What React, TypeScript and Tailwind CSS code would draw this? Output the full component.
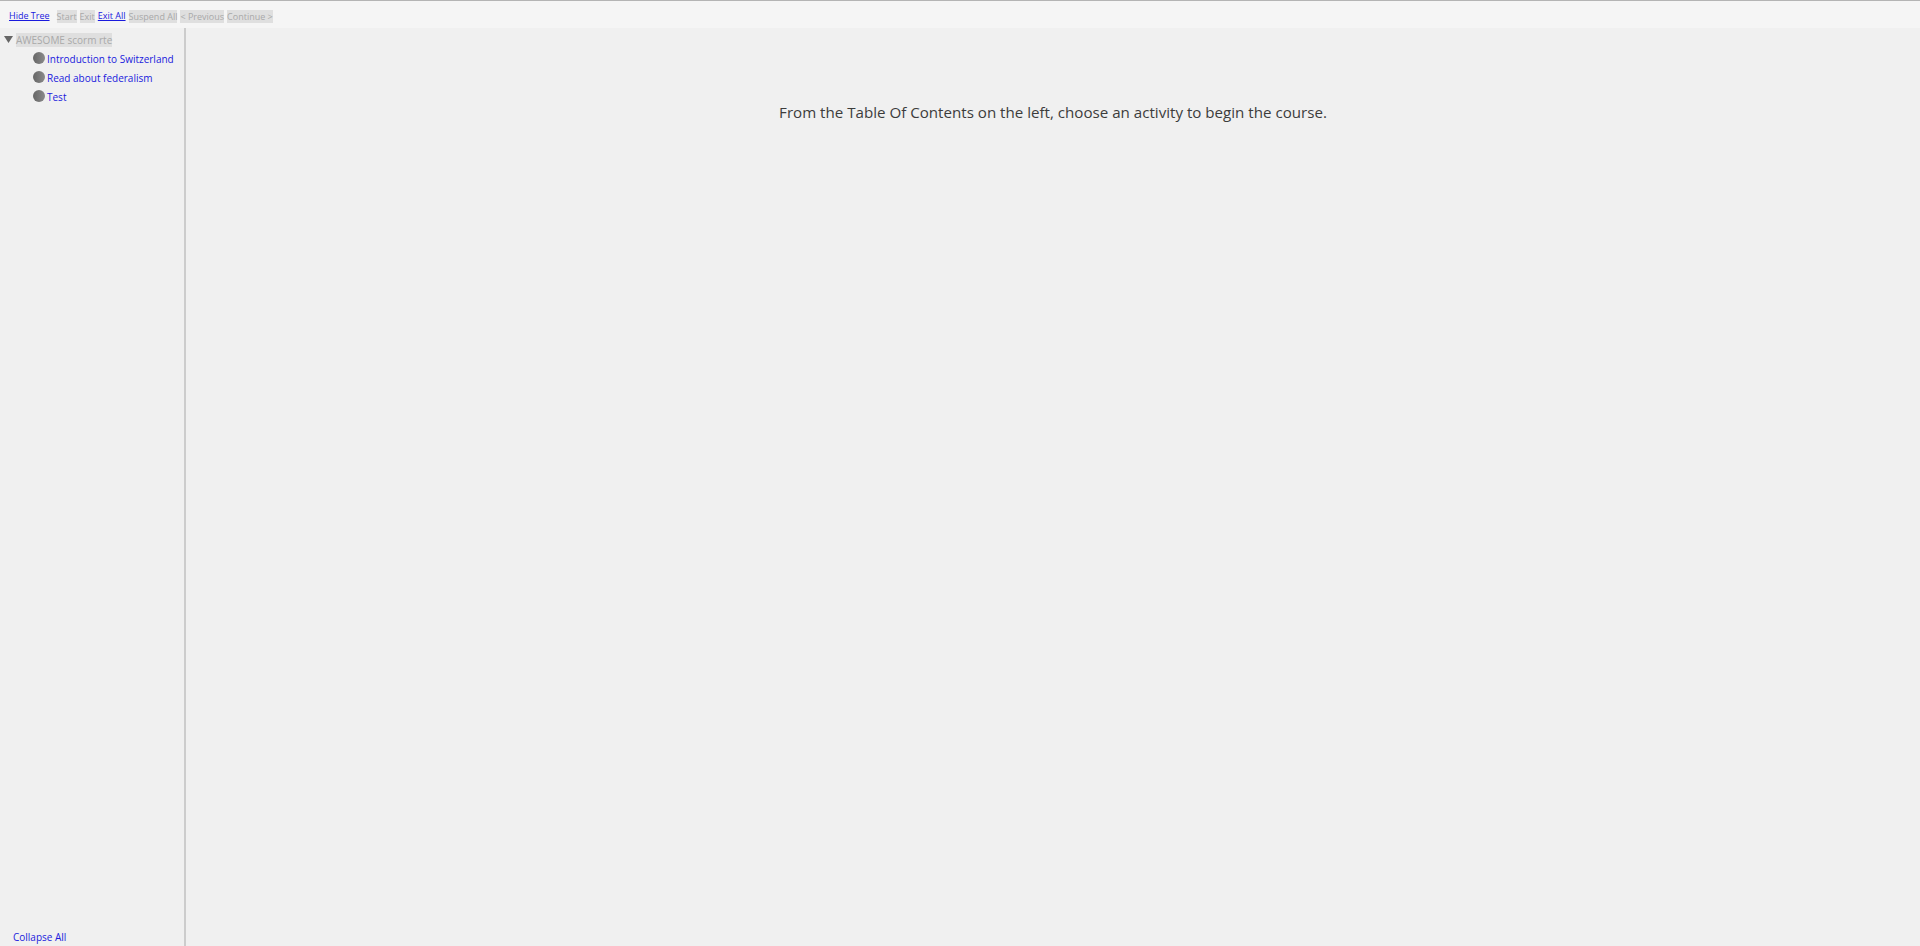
const items = ['Introduction to Switzerland', 'Read about federalism', 'Test']

function Disabled({ label }: { label: string }) {
  return <span className="bg-[#dfdfdf] text-[#a9a9a9] leading-[13px]">{label}</span>
}

export default function App() {
  return (
    <div className="h-[946px] flex flex-col bg-[#f0f0f0] font-['Open_Sans',sans-serif] overflow-hidden">
      {/* toolbar */}
      <div className="h-[28px] shrink-0 border-t border-t-[#b4b4b4] bg-[#f5f5f5] flex items-center pl-[9px] pt-[3px] text-[9px]">
        <a href="#" className="text-[#1a1add] underline mr-[7px]">Hide Tree</a>
        <div className="flex items-center gap-[3px]">
          <Disabled label="Start" />
          <Disabled label="Exit" />
          <a href="#" className="text-[#1a1add] underline">Exit All</a>
          <Disabled label="Suspend All" />
          <Disabled label="< Previous" />
          <Disabled label="Continue >" />
        </div>
      </div>

      <div className="flex-1 flex min-h-0">
        {/* table of contents */}
        <div className="w-[186px] shrink-0 border-r-2 border-r-[#cccccc] flex flex-col justify-between">
          <div className="pt-[5px]">
            <div className="flex items-center h-[14px]">
              <svg width="9" height="7" viewBox="0 0 9 7" className="ml-[4px] mr-[3px] -mt-[2px]">
                <polygon points="0,0 9,0 4.5,7" fill="#666" />
              </svg>
              <span className="bg-[#dfdfdf] text-[#a9a9a9] text-[10px] leading-[14px]">AWESOME scorm rte</span>
            </div>
            <div className="mt-[5px] flex flex-col gap-[5px] pl-[33px]">
              {items.map((item) => (
                <div key={item} className="flex items-center h-[14px]">
                  <span className="w-[12px] h-[12px] rounded-full bg-gradient-to-r from-[#666] to-[#8a8a8a] -mt-[2px]" />
                  <a href="#" className="text-[#1a1add] text-[10px] ml-[2px]">{item}</a>
                </div>
              ))}
            </div>
          </div>
          <a href="#" className="text-[#1a1add] text-[10px] pl-[13px] pb-[1px]">Collapse All</a>
        </div>

        {/* content */}
        <div className="flex-1 text-center pt-[73px]">
          <p className="text-[15.13px] leading-[22px] text-[#3c3c3c]">
            From the Table Of Contents on the left, choose an activity to begin the course.
          </p>
        </div>
      </div>
    </div>
  )
}
